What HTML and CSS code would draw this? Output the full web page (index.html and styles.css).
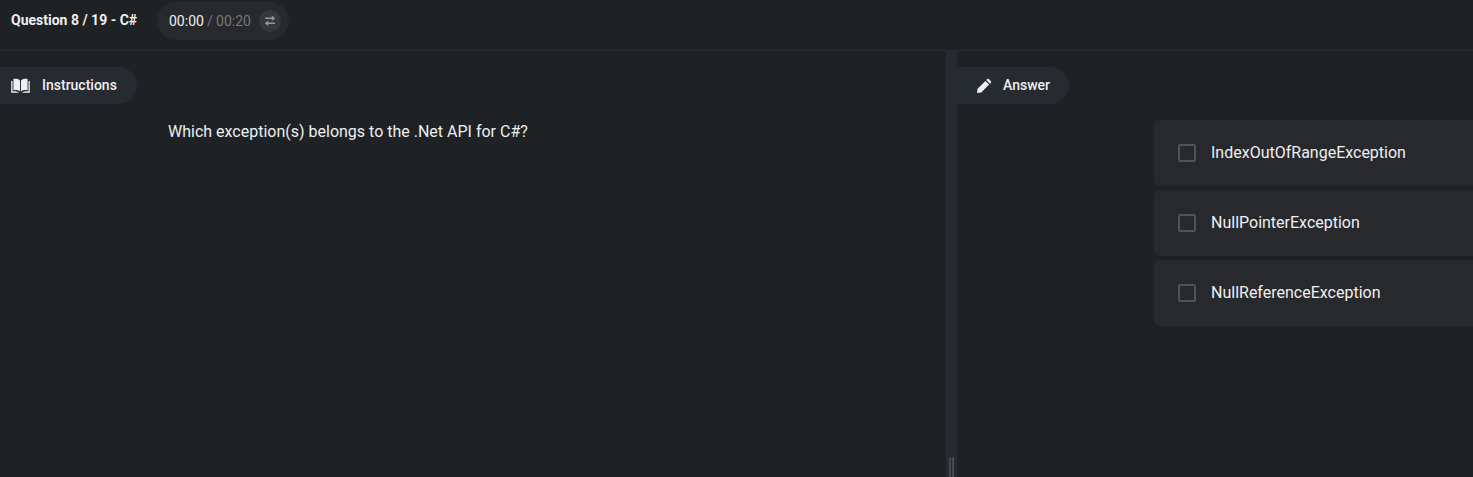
FILE: index.html
```html
<!DOCTYPE html>
<html lang="en">
<head>
<meta charset="utf-8">
<title>Question 8 / 19 - C#</title>
<link rel="stylesheet" href="styles.css">
</head>
<body>
<header class="topbar">
  <h1 class="title">Question 8 / 19 - C#</h1>
  <div class="timer">
    <span class="elapsed">00:00</span><span class="total">/ 00:20</span>
    <button class="swap" aria-label="Toggle timer">
      <svg width="12" height="12" viewBox="0 0 12 12" fill="currentColor"><path d="M1 2.500h6.800V.5l3.400 2.800-3.400 2.700V4H1zM11 7.500H4.200v-2L.8 8.300 4.200 11V9H11z"/></svg>
    </button>
  </div>
</header>
<main class="workspace">
  <section class="instructions">
    <h2 class="tab tab-instructions">
      <svg width="19" height="16" viewBox="0 0 19 16" fill="currentColor"><path d="M9 2.500C7.600 1 5.200.5 2.400 1.100v11.200c2.600-.5 4.900-.1 6.600 1.200zM10 2.500c1.400-1.500 3.800-2 6.600-1.400v11.200c-2.600-.5-4.900-.1-6.600 1.200z"/><path d="M.2 3h1.300v10.300c2.800-.4 5 0 6.500 1.400H.2zM18.800 3h-1.300v10.300c-2.800-.4-5 0-6.500 1.400h7.800z"/></svg>
      <span class="label">Instructions</span>
    </h2>
    <p class="question">Which exception(s) belongs to the .Net API for C#?</p>
  </section>
  <div class="splitter"><span class="grip"></span></div>
  <section class="answer">
    <h2 class="tab tab-answer">
      <svg width="16" height="16" viewBox="0 0 16 16" fill="currentColor"><path d="M1 15l.6-4.300 7.800-7.800 3.700 3.700-7.800 7.800zM10.200 2.100l.9-.9c.5-.5 1.300-.5 1.800 0l1.900 1.900c.5.5.5 1.300 0 1.800l-.9.900z"/></svg>
      <span class="label">Answer</span>
    </h2>
    <div class="options">
      <div class="option"><span class="box"></span><span class="label">IndexOutOfRangeException</span></div>
      <div class="option"><span class="box"></span><span class="label">NullPointerException</span></div>
      <div class="option"><span class="box"></span><span class="label">NullReferenceException</span></div>
    </div>
  </section>
</main>
</body>
</html>
```

FILE: styles.css
```css
* { box-sizing: border-box; }
body {
  margin: 0;
  height: 100vh;
  display: flex;
  flex-direction: column;
  overflow: hidden;
  background: #1e2224;
  color: #eeeff1;
  font-family: Roboto, "Liberation Sans", sans-serif;
}
.topbar {
  height: 51px;
  flex: none;
  display: flex;
  align-items: flex-start;
  border-bottom: 1px solid #272a2e;
}
.title {
  width: 157px;
  margin: 0;
  padding-left: 11px;
  font-size: 14px;
  line-height: 40px;
  font-weight: 700;
  white-space: nowrap;
}
.timer {
  width: 132px;
  height: 38px;
  margin-top: 2px;
  padding: 0 8px 0 12px;
  display: flex;
  align-items: center;
  border-radius: 19px;
  background: #28292d;
  font-size: 14px;
  white-space: nowrap;
}
.total { margin-left: 3px; color: #76777b; }
.swap {
  width: 22px;
  height: 22px;
  margin-left: auto;
  padding: 0;
  border: 0;
  border-radius: 50%;
  display: flex;
  align-items: center;
  justify-content: center;
  background: #34373c;
  color: #94979b;
}
.workspace { flex: 1; display: flex; min-height: 0; }
.instructions { width: 946px; flex: none; padding-top: 16px; }
.tab {
  height: 37px;
  margin: 0;
  display: flex;
  align-items: center;
  border-radius: 0 19px 19px 0;
  background: #262a31;
  font-size: 14px;
  font-weight: 500;
}
.label { padding-bottom: 2px; }
.tab-instructions { width: 137px; padding-left: 11px; gap: 12px; }
.tab-answer { width: 112px; padding-left: 19px; gap: 11px; }
.question { margin: 18px 0 0 168px; font-size: 16px; line-height: 20px; }
.splitter {
  width: 11px;
  flex: none;
  display: flex;
  align-items: flex-end;
  justify-content: center;
  background: #262a31;
}
.grip {
  width: 5px;
  height: 20px;
  border: solid #45484e;
  border-width: 0 2px;
}
.answer { flex: 1; min-width: 0; padding-top: 16px; }
.options {
  margin: 16px 0 0 197px;
  display: flex;
  flex-direction: column;
  gap: 4px;
}
.option {
  height: 66px;
  padding-left: 24px;
  display: flex;
  align-items: center;
  gap: 15px;
  border-radius: 5px 0 0 5px;
  background: #28292c;
  font-size: 16px;
}
.box {
  width: 18px;
  height: 18px;
  border: 2px solid #525356;
  border-radius: 2px;
}
```
